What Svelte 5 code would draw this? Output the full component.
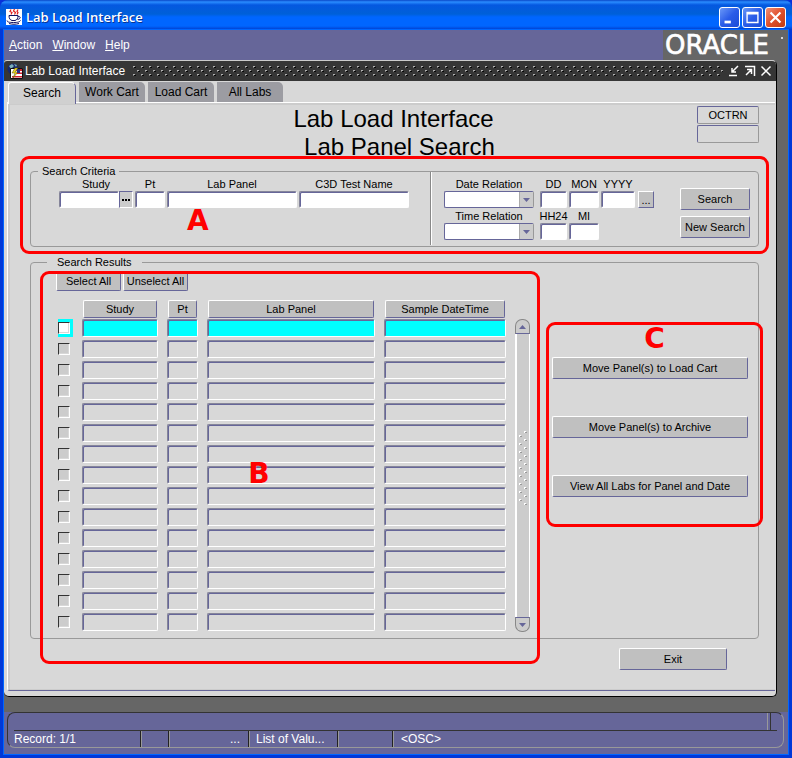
<script>
  const rows = Array.from({ length: 15 }, (_, i) => i);
  const tabs = ['Search', 'Work Cart', 'Load Cart', 'All Labs'];
  const columns = ['Study', 'Pt', 'Lab Panel', 'Sample DateTime'];
  const actions = ['Move Panel(s) to Load Cart', 'Move Panel(s) to Archive', 'View All Labs for Panel and Date'];
  let active = $state('Search');
  let selected = $state(rows.map(() => false));
  const setAll = (value) => (selected = rows.map(() => value));
</script>

<div class="window">
  <header class="titlebar">
    <svg class="java" viewBox="0 0 16 16" aria-hidden="true">
      <rect width="16" height="16" fill="#fff" />
      <path d="M5 0.5l-1 2 2 1-1 2M8.500 0l-1 2 2 1.500-1 2M12 0.500l-1 2 1 1-1 2" fill="none" stroke="#e02020" stroke-width="1.200" />
      <path d="M3 6.500h9M3 6.500c0 3 1 4.500 3 5h3c2-.5 3-2 3-5M12 7.500c3-.5 3 2.500-.5 3M1 11.500c0 1.500 2 2 6.500 2s6-.5 7-2M3 14.500c3 1 7 1 10 0" fill="none" stroke="#101060" />
    </svg>
    <h1>Lab Load Interface</h1>
    <div class="winbuttons">
      <button aria-label="Minimize"><svg viewBox="0 0 21 21"><path d="M5 14h7v3H5z" fill="#fff" /></svg></button>
      <button aria-label="Maximize"><svg viewBox="0 0 21 21"><path d="M4.500 5h12v11h-12zM4 6.500h13" fill="none" stroke="#fff" stroke-width="1.500" /></svg></button>
      <button class="close" aria-label="Close"><svg viewBox="0 0 21 21"><path d="M5 5l11 11M16 5L5 16" fill="none" stroke="#fff" stroke-width="2.400" /></svg></button>
    </div>
  </header>

  <div class="client">
    <div class="menubar">
      <nav>
        <a href="#action"><u>A</u>ction</a>
        <a href="#window"><u>W</u>indow</a>
        <a href="#help"><u>H</u>elp</a>
      </nav>
      <div class="brand">
        <svg width="125" height="30" viewBox="0 0 125 30" role="img" aria-label="ORACLE">
          <text x="2" y="24" fill="#fff">ORACLE</text>
          <circle cx="119" cy="8" r="1" fill="#fff" />
        </svg>
      </div>
    </div>

    <main class="form">
      <div class="formbar">
        <svg class="formicon" viewBox="0 0 16 16" aria-hidden="true">
          <circle cx="6" cy="6" r="5.500" fill="#182868" />
          <path d="M2 3l3-2 2 2-3 3zM7 1l3 1-1 2z" fill="#7cb0b8" />
          <path d="M3.500 5.500h12v10h-12z" fill="#fff" stroke="#101010" />
          <path d="M9 6h6v2H9zM9 9.500h6v1.500H9zM5 13h10v1.500H5z" fill="#d02030" />
          <path d="M8 5l-3 5h3l-2 5 5-6H8l3-4z" fill="#f0dc20" stroke="#504810" stroke-width=".5" />
          <path d="M10 6h3v4h-3z" fill="#283088" />
        </svg>
        <h2>Lab Load Interface</h2>
        <svg class="grip" height="12" aria-hidden="true">
          <defs>
            <pattern id="bar-dots" width="8" height="8" patternUnits="userSpaceOnUse">
              <path d="M0 1h2v1H0zM4 5h2v1H4z" fill="#b0b0b0" /><path d="M0 2h1v1H0zM4 6h1v1H4z" fill="#777" />
              <path d="M1 2h2v1H1zM5 6h2v1H5z" fill="#080808" />
            </pattern>
          </defs>
          <rect width="100%" height="12" fill="url(#bar-dots)" />
        </svg>
        <div class="formbuttons">
          <button aria-label="Minimize form"><svg viewBox="0 0 12 12"><path d="M10 1L4 7M4 3v4h4M1 10.500h8" /></svg></button>
          <button aria-label="Restore form"><svg viewBox="0 0 12 12"><path d="M1 1.500h9.500V11M2 10l5-5M3 4.500h4.500V9" /></svg></button>
          <button aria-label="Close form"><svg viewBox="0 0 12 12"><path d="M1.500 1.500l9 9M10.500 1.500l-9 9" /></svg></button>
        </div>
      </div>

      <div class="tabs" role="tablist">
        {#each tabs as tab}
          <button role="tab" aria-selected={active === tab} class:active={active === tab} onclick={() => (active = tab)}>{tab}</button>
        {/each}
      </div>

      <div class="panel">
        <div class="heading">
          <div class="ids"></div>
          <div class="titles">
            <div>Lab Load Interface</div>
            <div class="sub">Lab Panel Search</div>
          </div>
          <div class="ids">
            <input class="plain" aria-label="User" value="OCTRN" readonly />
            <input class="plain" aria-label="Role" readonly />
          </div>
        </div>

        <section class="marked">
          <fieldset class="criteria">
            <legend>Search Criteria</legend>
            <div class="fields">
              <div class="fld study">
                <label for="study">Study</label>
                <div class="pair">
                  <input id="study" />
                  <button class="lov" aria-label="Study list"><svg viewBox="0 0 10 2"><path d="M1 0h2v2H1zM4 0h2v2H4zM7 0h2v2H7z" /></svg></button>
                </div>
              </div>
              <div class="fld w30"><label for="pt">Pt</label><input id="pt" /></div>
              <div class="fld w130"><label for="panel">Lab Panel</label><input id="panel" /></div>
              <div class="fld w110"><label for="test">C3D Test Name</label><input id="test" /></div>
            </div>
            <div class="divider"></div>
            <div class="dates">
              <div class="fields">
                <div class="fld w90">
                  <label for="daterel">Date Relation</label>
                  <div class="drop"><select id="daterel"><option></option></select><span><svg viewBox="0 0 7 4"><path d="M0 0h7L3.500 4z" /></svg></span></div>
                </div>
                <div class="fld w27"><label for="dd">DD</label><input id="dd" /></div>
                <div class="fld w30"><label for="mon">MON</label><input id="mon" /></div>
                <div class="fld w34"><label for="yyyy">YYYY</label><input id="yyyy" /></div>
                <button class="calendar" aria-label="Pick a date">...</button>
              </div>
              <div class="fields">
                <div class="fld w90">
                  <label for="timerel">Time Relation</label>
                  <div class="drop"><select id="timerel"><option></option></select><span><svg viewBox="0 0 7 4"><path d="M0 0h7L3.500 4z" /></svg></span></div>
                </div>
                <div class="fld w27"><label for="hh">HH24</label><input id="hh" /></div>
                <div class="fld w30"><label for="mi">MI</label><input id="mi" /></div>
              </div>
            </div>
            <div class="run">
              <button class="btn">Search</button>
              <button class="btn">New Search</button>
            </div>
          </fieldset>
          <div class="mark mark-a"><b>A</b></div>
        </section>

        <fieldset class="results">
          <legend>Search Results</legend>
          <div class="list">
            <div class="bulk">
              <button class="btn" onclick={() => setAll(true)}>Select All</button>
              <button class="btn" onclick={() => setAll(false)}>Unselect All</button>
            </div>
            <div class="grid">
              <table>
                <colgroup><col class="c0" /><col class="c1" /><col class="c2" /><col /><col class="c4" /></colgroup>
                <thead>
                  <tr>
                    <td></td>
                    {#each columns as column}<th><span>{column}</span></th>{/each}
                  </tr>
                </thead>
                <tbody>
                  {#each rows as row}
                    <tr class:current={row === 0}>
                      <td><div class="tick"><input type="checkbox" aria-label={`Select row ${row + 1}`} bind:checked={selected[row]} /></div></td>
                      {#each columns as column}
                        <td><input class="cell" aria-label={`${column} ${row + 1}`} readonly /></td>
                      {/each}
                    </tr>
                  {/each}
                </tbody>
              </table>
              <div class="scroll">
                <button class="up" aria-label="Scroll up"><svg viewBox="0 0 7 4"><path d="M0 4h7L3.500 0z" /></svg></button>
                <div class="track">
                  <svg width="8" height="76" aria-hidden="true">
                    <defs>
                      <pattern id="thumb-dots" width="8" height="8" patternUnits="userSpaceOnUse">
                        <path d="M5 1h2v1H5zM5 1h1v2H5zM0 5h2v1H0zM0 5h1v2H0z" fill="#fff" />
                        <path d="M6 2h2v1H6zM1 6h2v1H1z" fill="#999" />
                      </pattern>
                    </defs>
                    <rect width="8" height="76" fill="url(#thumb-dots)" />
                  </svg>
                </div>
                <button class="down" aria-label="Scroll down"><svg viewBox="0 0 7 4"><path d="M0 0h7L3.500 4z" /></svg></button>
              </div>
            </div>
            <div class="mark mark-b"><b>B</b></div>
          </div>
          <div class="actions">
            {#each actions as action}<button class="btn">{action}</button>{/each}
            <div class="mark mark-c"><b>C</b></div>
          </div>
        </fieldset>

        <div class="foot"><button class="btn">Exit</button></div>
      </div>
    </main>

    <footer>
      <div class="status">
        <div class="message"></div>
        <div class="cells">
          <span class="s1">Record: 1/1</span>
          <span class="s2"></span>
          <span class="s3">...</span>
          <span class="s4">List of Valu...</span>
          <span class="s5"></span>
          <span class="s6">&lt;OSC&gt;</span>
        </div>
      </div>
    </footer>
  </div>
</div>

<style>
  :global(body) { margin: 0; background: #0831d9; }
  * { box-sizing: border-box; }
  button, input, select { font: inherit; color: inherit; margin: 0; padding: 0; border-radius: 0; }
  h1, h2 { margin: 0; font-weight: normal; }
  .window {
    min-height: 100vh; display: flex; flex-direction: column;
    font: 11px/13px "Liberation Sans", Arial, sans-serif; color: #000;
    background: #0038d8; border-radius: 8px 8px 0 0;
  }
  .titlebar {
    height: 30px; flex: none; display: flex; align-items: center; padding: 4px 6px 0; gap: 4px; color: #fff;
    background: linear-gradient(#0a48c8 0, #2a8cff 2px, #0458e0 5px, #0060d8 14px, #0066ff 17px, #0066ff 26px, #0038c8 30px);
    border-radius: 8px 8px 0 0;
  }
  .java { width: 16px; height: 16px; }
  h1 { flex: 1; font: 600 13px/18px "Open Sans", "Noto Sans", sans-serif; text-shadow: 1px 1px #0a3490; }
  .winbuttons { display: flex; gap: 2px; }
  .winbuttons button {
    width: 21px; height: 21px; border: 1px solid #fff; border-radius: 3px;
    background: linear-gradient(135deg, #6a98f8, #2a5ce8 50%, #1a4cd8);
  }
  .winbuttons svg { display: block; width: 19px; height: 19px; }
  .winbuttons .close { background: linear-gradient(135deg, #f09078, #e0502c 50%, #c03c14); }

  .client {
    flex: 1; display: flex; flex-direction: column; margin: 0 4px 4px; background: #666;
    box-shadow: 0 0 0 1px #0066ff;
  }
  .menubar { height: 30px; flex: none; display: flex; background: #669; font-size: 12px; }
  nav { flex: 1; display: flex; gap: 10px; padding: 8px 5px; }
  nav a { color: #fff; text-decoration: none; line-height: 14px; }
  .brand { background: #666; height: 30px; }
  .brand svg { display: block; }
  .brand text { font: 26px "DejaVu Sans", sans-serif; stroke: #fff; stroke-width: 0.6px; }

  .form {
    flex: 1; display: flex; flex-direction: column; margin-right: 11px; background: #d8d8d8;
    border-top: 1px solid #ccc; border-right: 1px solid #000; border-bottom: 1px solid #000;
    border-radius: 3px 5px 5px 5px;
  }
  .formbar {
    height: 20px; display: flex; align-items: center; background: #363636; color: #fff;
    padding: 0 4px 0 3px; border-radius: 3px 4px 0 0;
  }
  .formbar h2 { font-size: 12px; line-height: 14px; white-space: nowrap; }
  .formicon { width: 16px; height: 16px; margin-right: 2px; flex: none; }
  .grip { flex: 1; min-width: 0; margin: 0 5px 0 8px; }
  .formbuttons { display: flex; gap: 4px; }
  .formbuttons button { width: 12px; height: 12px; border: 0; background: none; }
  .formbuttons svg { display: block; width: 12px; height: 12px; fill: none; stroke: #fff; stroke-width: 1.500; }

  .tabs { display: flex; gap: 3px; padding: 1px 0 0 4px; height: 21px; font-size: 12px; }
  .tabs button { width: 66px; border: 0; background: #9c9ca2; border-radius: 0 5px 0 0; line-height: 20px; }
  .tabs .active {
    width: 68px; background: #d0d0d0; border-top: 1px solid #fff; border-left: 1px solid #fff;
    border-right: 1px solid #669; border-radius: 3px 5px 0 0; z-index: 1; margin-bottom: -2px; line-height: 19px;
  }

  .panel {
    flex: 1; display: flex; flex-direction: column; margin: 0 1px 5px 3px; padding: 0 16px 0 22px;
    border-top: 1px solid #fff; border-left: 1px solid #fff; border-bottom: 1px solid #669;
    border-radius: 0 0 0 3px; box-shadow: inset 2px 2px #ccc, inset 0 -1px #ccc;
  }
  .heading { height: 62px; display: flex; padding-top: 2px; }
  .titles { flex: 1; text-align: center; font-size: 24px; line-height: 28px; padding-right: 2px; }
  .titles .sub { padding-left: 12px; }
  .ids { width: 62px; display: flex; flex-direction: column; gap: 1px; padding-top: 1px; }

  input:not([type]), select {
    display: block; width: 100%; height: 17px; background: #fff; outline: 0; appearance: none;
    border: 1px solid; border-color: #85859a #fff #fff #85859a; border-radius: 2px;
    box-shadow: inset 1px 1px #669;
  }
  input.plain { height: 18px; background: #d8d8d8; text-align: center; border-color: #669 #999 #999 #669; box-shadow: none; }
  input.cell { height: 18px; background: #d8d8d8; }

  fieldset { margin: 0; min-width: 0; border: 1px solid #999; border-radius: 4px; }
  legend { line-height: 13px; }
  .marked { position: relative; }
  .criteria { display: flex; padding: 0 8px 6px 28px; }
  .criteria legend { margin-left: -21px; padding: 0 4px; }
  .results legend { margin-left: -9px; padding: 0 10px; }
  .fields { display: flex; gap: 2px; }
  .fld { text-align: center; white-space: nowrap; }
  .fld label { display: flex; justify-content: center; }
  .study { width: 74px; }
  .pair { display: flex; }
  .pair button { flex: none; }
  .lov { width: 14px; height: 17px; border: 1px solid; border-color: #669 #fff #fff #669; background: #ccc; }
  .lov svg { display: block; width: 10px; height: 2px; margin: 0 auto; }
  .w27 { width: 27px; }
  .w30 { width: 30px; }
  .w34 { width: 34px; }
  .w90 { width: 90px; margin-right: 4px; }
  .w110 { width: 110px; }
  .w130 { width: 130px; }
  .divider { width: 2px; margin: -6px 12px -5px 21px; border-left: 1px solid #888; border-right: 1px solid #fff; }
  .dates { display: flex; flex-direction: column; gap: 2px; }
  .drop { position: relative; }
  .drop select { border-color: #669 #999 #669 #669; box-shadow: none; }
  .drop span {
    position: absolute; top: 1px; right: 1px; bottom: 1px; width: 14px; background: #ccc; border-left: 1px solid #aaa;
    pointer-events: none; display: grid; place-items: center;
  }
  .drop svg, .scroll button svg { width: 7px; height: 4px; fill: #669; display: block; margin: 0 auto; }
  .calendar {
    width: 16px; height: 17px; align-self: flex-end; margin-left: 1px; background: #c0c0c0; line-height: 12px;
    border: 1px solid; border-color: #fff #669 #669 #fff;
  }
  .run { width: 70px; margin: 10px 0 -2px auto; display: flex; flex-direction: column; gap: 6px; }
  .btn {
    height: 22px; background: #c0c0c0; border: 1px solid; border-color: #fff #669 #669 #fff;
    border-radius: 2px; white-space: nowrap;
  }

  .results { display: flex; margin-top: 9px; padding: 3px 10px 4px 25px; }
  .list { flex: 1; position: relative; max-width: 474px; }
  .bulk { display: flex; gap: 2px; margin-bottom: 9px; }
  .bulk .btn { width: 65px; height: 19px; }
  .grid { display: flex; padding-left: 2px; }
  table { flex: 1; min-width: 0; table-layout: fixed; border-collapse: collapse; }
  .c0 { width: 24px; }
  .c1 { width: 85px; }
  .c2 { width: 40px; }
  .c4 { width: 131px; }
  td, th { padding: 0 9px 3px 0; font-weight: normal; }
  td:first-child { padding-right: 0; }
  thead td, th { padding-bottom: 0; }
  th span {
    display: block; height: 18px; line-height: 17px; margin: 0 1px 1px; background: #c0c0c0;
    border: 1px solid; border-color: #fff #669 #669 #fff; border-radius: 2px;
  }
  .tick { width: 15px; height: 18px; padding-top: 3px; }
  .tick input {
    display: block; width: 12px; height: 12px; appearance: none; background: #ccc;
    border: 1px solid; border-color: #333 #fff #fff #333; box-shadow: inset -1px -1px #d8d8d8;
  }
  .tick input:checked { background: #336; }
  .current .tick, .current .cell { background: #0ff; }
  .current .tick input { background: #fff; }
  .scroll { width: 15px; margin: 19px 0 2px; display: flex; flex-direction: column; }
  .scroll button { height: 15px; background: #ccc; border: 1px solid #888; }
  .scroll .up { border-radius: 7px 7px 0 0; border-bottom-color: #669; }
  .scroll .down { border-radius: 0 0 7px 7px; border-top-color: #669; }
  .track {
    flex: 1; display: flex; align-items: center; padding: 0 0 16px 2px; background: #ccc;
    border-left: 2px solid #fff; border-right: 1px solid #fff;
  }
  .actions { position: relative; width: 196px; margin: 85px 0 0 auto; align-self: flex-start; display: flex; flex-direction: column; gap: 37px; }

  .mark { position: absolute; border: 3px solid red; border-radius: 9px; pointer-events: none; color: red; display: grid; }
  .mark b { font: bold 28px/28px "DejaVu Sans", Verdana, sans-serif; }
  .mark-a { inset: -9px -10px -7px; padding: 48px 0 0 164px; }
  .mark-b { inset: -1px -10px -30px -16px; place-content: center; padding: 12px 62px 0 0; }
  .mark-c { inset: -35px -15px -30px -6px; justify-content: center; }

  .foot { padding: 9px 32px 20px 0; text-align: right; }
  .foot .btn { width: 108px; display: inline-block; vertical-align: top; }

  footer { flex: none; margin-top: 15px; height: 42px; background: #669; padding: 0 4px 0 3px; color: #fff; font-size: 12px; }
  .status { height: 36px; border: 1px solid; border-color: #333 #999 #999 #333; border-radius: 8px; padding: 0 6px; }
  .message { height: 18px; border-bottom: 1px solid #333; position: relative; display: flex; justify-content: flex-end; }
  .message::after { content: ""; width: 2px; margin-right: 6px; border-left: 1px solid #999; border-right: 1px solid #333; }
  .cells { display: flex; height: 16px; line-height: 16px; }
  .cells span { border-right: 1px solid #222; box-shadow: 1px 0 #999; white-space: nowrap; }
  .s1 { width: 127px; }
  .s2 { width: 28px; }
  .s3 { width: 80px; text-align: right; padding-right: 8px; }
  .s4 { width: 89px; padding-left: 7px; }
  .s5 { width: 55px; }
  .cells .s6 { border: 0; box-shadow: none; padding-left: 8px; }
</style>
